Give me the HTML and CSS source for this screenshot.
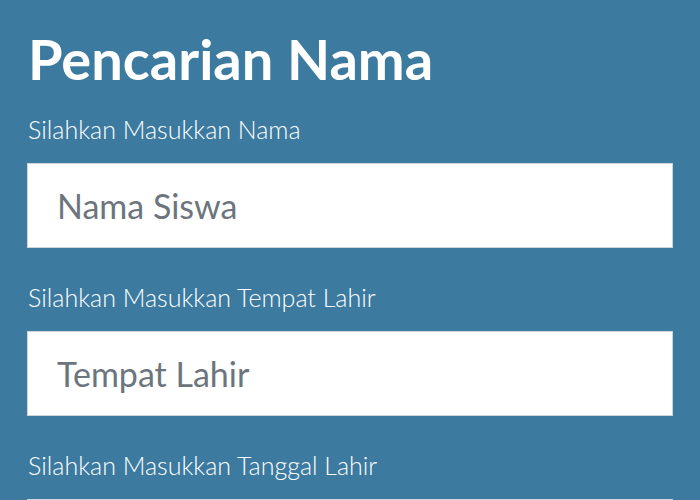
FILE: index.html
```html
<!DOCTYPE html>
<html lang="en">
<head>
    <meta charset="UTF-8" />
    <title>Pencarian Nama</title>
    <link rel="stylesheet" href="styles.css">
</head>
<body>
    <!-- Form Pencarian -->
    <div class="search-page">
        <h1 class="title">Pencarian Nama</h1>

        <div class="field">
            <label class="field-label" for="nama">Silahkan Masukkan Nama</label>
            <input class="field-input" type="text" id="nama" placeholder="Nama Siswa">
        </div>

        <div class="field">
            <label class="field-label" for="tempat">Silahkan Masukkan Tempat Lahir</label>
            <input class="field-input" type="text" id="tempat" placeholder="Tempat Lahir">
        </div>

        <div class="field">
            <label class="field-label" for="tanggal">Silahkan Masukkan Tanggal Lahir</label>
            <input class="field-input" type="text" id="tanggal" placeholder="Tanggal Lahir">
        </div>
    </div>
</body>
</html>
```

FILE: styles.css
```css
/* Basic Styling */
body {
    margin: 0;
    background-color: #3c7aa0;
    color: #ffffff;
    font-family: "Lato", "Open Sans", sans-serif;
    overflow: hidden;
}

.search-page {
    padding: 24px 27px 0 27px;
    display: flex;
    flex-direction: column;
}

.title {
    margin: 0 0 18px 1px;
    font-size: 56px;
    font-weight: 700;
    line-height: 70px;
}

/* Form Fields */
.field {
    display: flex;
    flex-direction: column;
    margin-bottom: 32px;
}

.field-label {
    font-size: 25px;
    font-weight: 300;
    line-height: 34px;
    margin: 0 0 17px 1px;
}

.field-input {
    box-sizing: border-box;
    width: 100%;
    height: 85px;
    border: 1px solid #ced4da;
    padding: 0 29px;
    font-family: inherit;
    font-size: 34px;
    color: #495057;
    background-color: #ffffff;
}

.field-input::placeholder {
    color: #6c757d;
}
```
